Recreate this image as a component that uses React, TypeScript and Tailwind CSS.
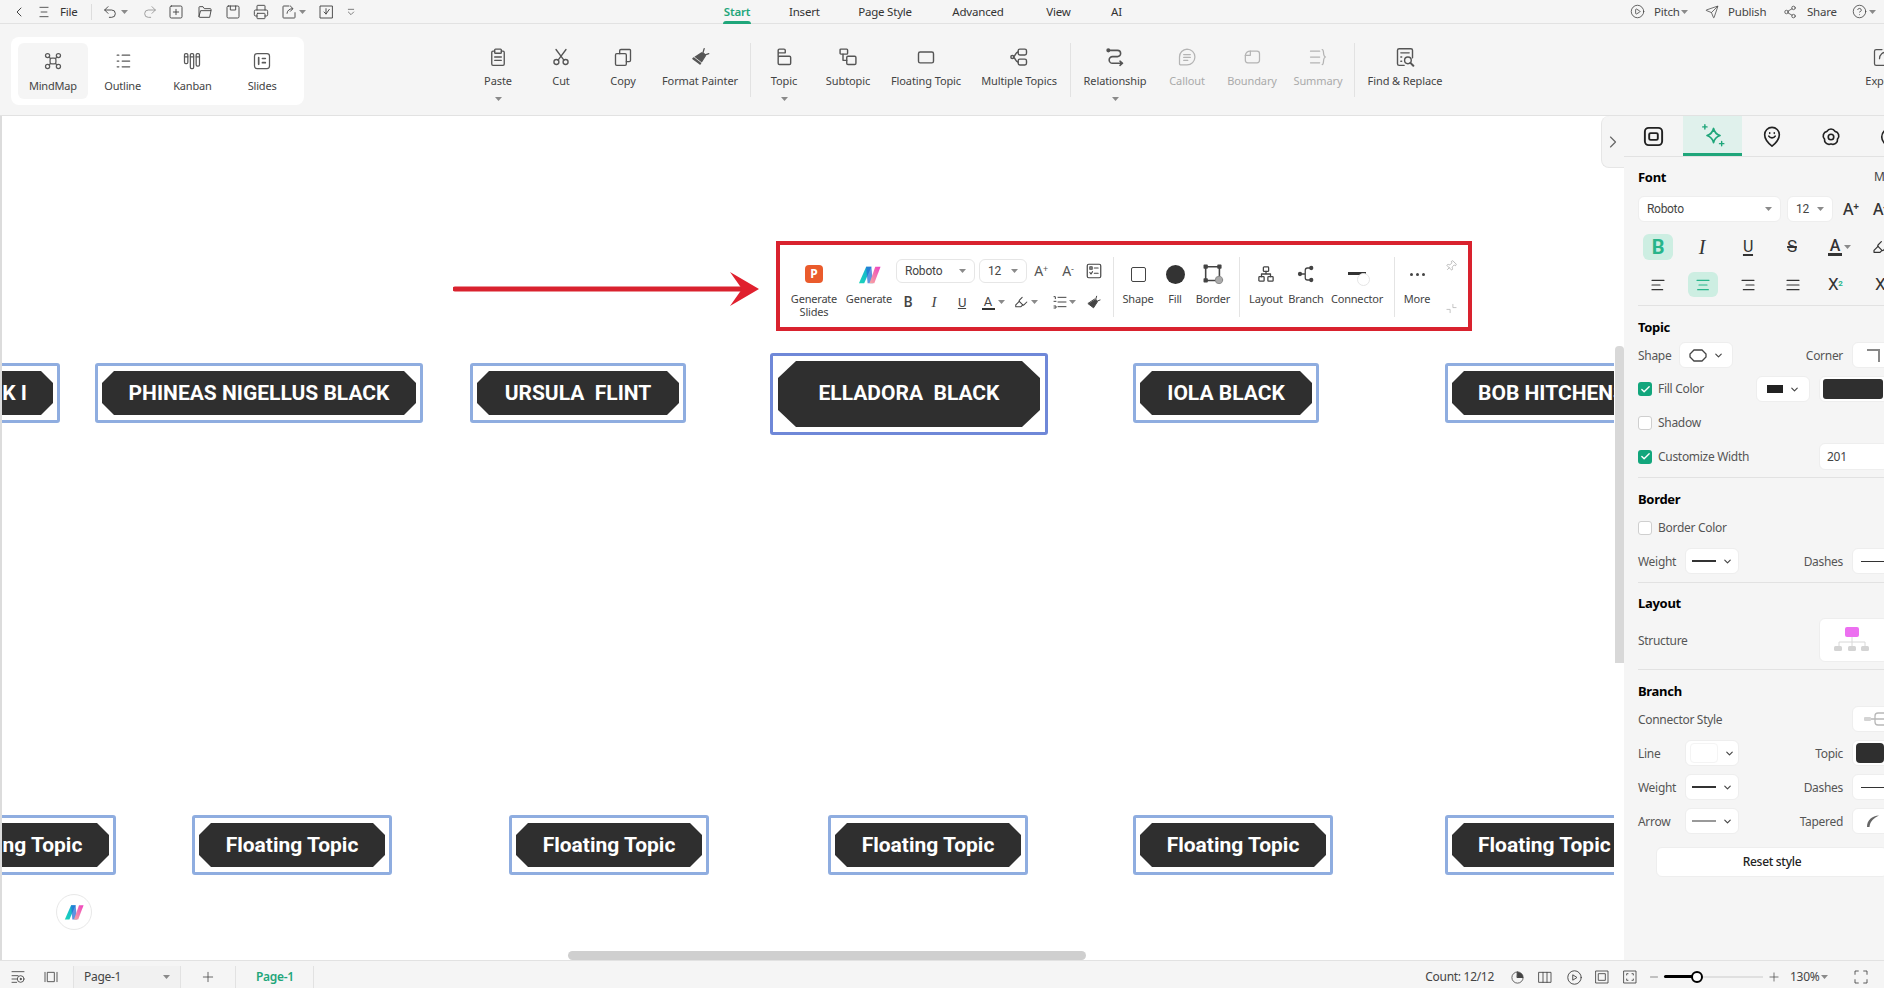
import type { ReactNode } from "react";
import {
  Check,
  ChevronDown,
  ChevronLeft,
  ChevronRight,
  CirclePlay,
  CircleHelp,
  Highlighter,
  Minus,
  Pin,
  Plus,
  Printer,
  Redo2,
  Send,
  Share2,
  Undo2,
} from "lucide-react";

function Ico({ size = 20, sw = 1.5, className = "", children }: { size?: number; sw?: number; className?: string; children: ReactNode }) {
  return (
    <svg width={size} height={size} viewBox="0 0 24 24" fill="none" stroke="currentColor" strokeWidth={sw} strokeLinecap="round" strokeLinejoin="round" className={"shrink-0 " + className}>
      {children}
    </svg>
  );
}

function Caret({ className = "" }: { className?: string }) {
  return (
    <svg width="7" height="4" viewBox="0 0 7 4" className={"shrink-0 " + className}>
      <path d="M0 0h7L3.5 4z" fill="#8a8a8a" />
    </svg>
  );
}

function AiLogo({ size = 24 }: { size?: number }) {
  return (
    <svg width={size} height={size} viewBox="0 0 24 24" className="shrink-0">
      <defs>
        <linearGradient id="aiL" x1="0" y1="1" x2="1" y2="0">
          <stop offset="0" stopColor="#19d6b8" />
          <stop offset="1" stopColor="#17a9d8" />
        </linearGradient>
        <linearGradient id="aiR" x1="0" y1="1" x2="1" y2="0">
          <stop offset="0" stopColor="#f7a9a0" />
          <stop offset="1" stopColor="#ee3fc0" />
        </linearGradient>
      </defs>
      <path d="M1 21 8.500 4H14L6.500 21z" fill="url(#aiL)" />
      <path d="M8.500 4H14l1.500 17H10z" fill="#2a6fd6" opacity=".75" />
      <path d="M12 21 18 4h5.500L17 21z" fill="url(#aiR)" />
    </svg>
  );
}

const icons = {
  mindmap: (
    <Ico size={20}>
      <circle cx="5.500" cy="5.500" r="2.500" />
      <circle cx="18.500" cy="5.500" r="2.500" />
      <circle cx="5.500" cy="18.500" r="2.500" />
      <circle cx="18.500" cy="18.500" r="2.500" />
      <rect x="8.500" y="8.500" width="7" height="7" rx="2" />
      <path d="M7.500 7.500 9 9M16.500 7.500 15 9M7.500 16.500 9 15M16.500 16.500 15 15" />
    </Ico>
  ),
  outline: (
    <Ico size={20}>
      <path d="M5 5h2M11 5h9M5 12h2M11 12h9M5 19h2M11 19h9" />
    </Ico>
  ),
  kanban: (
    <Ico size={20}>
      <rect x="3" y="3" width="4" height="12" rx="1.500" />
      <rect x="10" y="3" width="4" height="18" rx="1.500" />
      <rect x="17" y="3" width="4" height="15" rx="1.500" />
      <path d="M3 7h4M10 7h4M17 7h4" />
    </Ico>
  ),
  slides: (
    <Ico size={20}>
      <rect x="3" y="3" width="18" height="18" rx="3" />
      <path d="M8 8v8M12.500 9H16M12.500 14H16" strokeWidth="2" />
    </Ico>
  ),
  paste: (
    <Ico size={20} sw={1.6}>
      <path d="M8 5H6a1.500 1.500 0 0 0-1.500 1.500v14A1.500 1.500 0 0 0 6 22h12a1.500 1.500 0 0 0 1.500-1.500v-14A1.500 1.500 0 0 0 18 5h-2" />
      <rect x="8" y="2.500" width="8" height="5" rx="1" />
      <path d="M8 12h8M8 16h8" />
    </Ico>
  ),
  cut: (
    <Ico size={20} sw={1.6}>
      <circle cx="6.500" cy="18" r="3" />
      <circle cx="17.500" cy="18" r="3" />
      <path d="M6 3l9.500 12.800M18 3 8.500 15.800" />
    </Ico>
  ),
  copy: (
    <Ico size={20} sw={1.6}>
      <rect x="3" y="8" width="13" height="14" rx="1.500" />
      <path d="M8 8V4.500A1.500 1.500 0 0 1 9.500 3H20a1 1 0 0 1 1 1v12a1.500 1.500 0 0 1-1.500 1.500H16" />
    </Ico>
  ),
  painter: (
    <Ico size={20} sw={1.6}>
      <path d="M17 2l-1.500 5 3 2.500 4-1.500" />
      <path d="M14 7l4.500 3.500-6.500 10L3.500 14z" fill="currentColor" />
      <path d="M5 12l9 7" stroke="#f5f5f5" strokeWidth="1" />
    </Ico>
  ),
  topic: (
    <Ico size={20} sw={1.7}>
      <path d="M5 11V4a1.500 1.500 0 0 1 1.500-1.500H12A1.500 1.500 0 0 1 13.500 4v3H5" />
      <rect x="5" y="11" width="15" height="10" rx="1.500" />
    </Ico>
  ),
  subtopic: (
    <Ico size={20} sw={1.7}>
      <rect x="2.500" y="2.500" width="9" height="6" rx="1" />
      <path d="M6 8.500V16h4.500" />
      <rect x="10.500" y="11" width="11" height="10" rx="1.500" />
    </Ico>
  ),
  floating: (
    <Ico size={20} sw={1.7}>
      <rect x="3" y="6" width="18" height="13" rx="2" />
    </Ico>
  ),
  multiple: (
    <Ico size={20} sw={1.7}>
      <rect x="11" y="2.500" width="10" height="7" rx="2" />
      <rect x="11" y="14.500" width="10" height="7" rx="2" />
      <circle cx="4" cy="12" r="1.800" />
      <path d="M11 6c-3 0-3 4-5.200 5.500M11 18c-3 0-3-4-5.200-5.500" />
    </Ico>
  ),
  relation: (
    <Ico size={20} sw={1.9}>
      <circle cx="4" cy="4" r="1.500" fill="currentColor" />
      <path d="M5.500 4H15a3.500 3.500 0 0 1 0 7.500H9a4 4 0 0 0 0 8h11" />
      <path d="M18 17l3 2.500-3 2.500" fill="currentColor" />
    </Ico>
  ),
  callout: (
    <Ico size={20}>
      <path d="M12 2.500a9.500 9.500 0 0 1 0 19H4.500c-.8 0-1.500-.7-1.500-1.500v-8a9.500 9.500 0 0 1 9-9.500z" />
      <path d="M8 9h8M8 12.500h8M8 16h5" />
    </Ico>
  ),
  boundary: (
    <Ico size={20}>
      <path d="M10 5h8a3 3 0 0 1 3 3v8a3 3 0 0 1-3 3H7a3 3 0 0 1-3-3v-6h6z" />
      <path d="M4 10a6 6 0 0 1 6-5" />
    </Ico>
  ),
  summary: (
    <Ico size={20}>
      <path d="M3 5h11M3 12h11M3 19h11M17 3c3 0 0 8 4 9-4 1-1 9-4 9" />
    </Ico>
  ),
  find: (
    <Ico size={20} sw={1.7}>
      <path d="M11 22H5a2 2 0 0 1-2-2V4a2 2 0 0 1 2-2h14a2 2 0 0 1 2 2v9" />
      <path d="M7 7h10M7 12h1M7 17h1" />
      <circle cx="15.500" cy="16" r="4" />
      <path d="M18.500 19l3.500 3.500" strokeWidth="2.400" />
    </Ico>
  ),
  exportIcon: (
    <Ico size={20}>
      <path d="M12 3H5a2 2 0 0 0-2 2v15a2 2 0 0 0 2 2h15a2 2 0 0 0 2-2v-8" />
      <path d="M9 14c0-5 4-8 9-8M15 2.500 19 6l-4 3.500" />
    </Ico>
  ),
};

function ViewTab({ icon, label, active }: { icon: ReactNode; label: string; active?: boolean }) {
  return (
    <div className={"w-[70px] h-[56px] rounded-md flex flex-col items-center text-[#5a5a5a] " + (active ? "bg-[#f5f5f5]" : "")}>
      <div className="mt-[8px]">{icon}</div>
      <span className="mt-[8px] text-[11px] leading-[14px] text-[#444]">{label}</span>
    </div>
  );
}

function RibbonTool({ icon, label, w, caret, off }: { icon: ReactNode; label: string; w: string; caret?: boolean; off?: boolean }) {
  return (
    <div className={"flex flex-col items-center shrink-0 " + w + (off ? " text-[#b4b4b4]" : " text-[#555]")}>
      <div className="mt-[23px] h-[20px]">{icon}</div>
      <span className={"mt-[7px] text-[11px] leading-[14px] tracking-[-0.1px] whitespace-nowrap " + (off ? "text-[#aaa]" : "text-[#444]")}>{label}</span>
      {caret && <Caret className="mt-[9px]" />}
    </div>
  );
}

function RibbonSep() {
  return <div className="w-px h-[54px] mt-[19px] bg-[#e2e2e2] shrink-0" />;
}

function TitleBar() {
  return (
    <header className="h-[24px] shrink-0 flex items-center bg-[#f5f5f5] border-b border-[#e2e2e2] text-[11.5px] text-[#333] pl-[11px] whitespace-nowrap">
      <ChevronLeft size={16} strokeWidth={1.5} className="text-[#444] shrink-0" />
      <Ico size={14} className="ml-[10px] text-[#444]">
        <path d="M5 4h14M7 12h10M5 20h14" />
      </Ico>
      <span className="ml-[9px] w-[18px] leading-[16px]">File</span>
      <div className="ml-[13px] w-px h-[16px] bg-[#ddd]" />
      <Undo2 size={16} strokeWidth={1.4} className="ml-[10px] text-[#444] shrink-0" />
      <Caret className="ml-[3px]" />
      <Redo2 size={16} strokeWidth={1.4} className="ml-[14px] text-[#999] shrink-0" />
      <Ico size={16} sw={1.4} className="ml-[10px] text-[#444]">
        <rect x="3" y="3" width="18" height="18" rx="2" />
        <path d="M12 8v8M8 12h8" />
      </Ico>
      <Ico size={16} sw={1.4} className="ml-[13px] text-[#444]">
        <path d="M3 19V5a1 1 0 0 1 1-1h5l2 3h9a1 1 0 0 1 1 1v2M3 19a1 1 0 0 0 1 1h15l2-10H6z" />
      </Ico>
      <Ico size={16} sw={1.4} className="ml-[12px] text-[#444]">
        <rect x="3" y="3" width="18" height="18" rx="2" />
        <path d="M8 3v6h8V3" />
      </Ico>
      <Printer size={16} strokeWidth={1.4} className="ml-[12px] text-[#444] shrink-0" />
      <Ico size={16} sw={1.4} className="ml-[12px] text-[#444]">
        <path d="M12 3H4a1 1 0 0 0-1 1v16a1 1 0 0 0 1 1h16a1 1 0 0 0 1-1v-7" />
        <path d="M9 14c0-4 4-7 8-7M14 3l4 4-4 4" />
      </Ico>
      <Caret className="ml-[2px]" />
      <Ico size={16} sw={1.4} className="ml-[12px] text-[#444]">
        <path d="M21 3H3v18h18z" />
        <path d="M12 7v8M9 12l3 3 5-7" />
      </Ico>
      <Ico size={8} sw={2.500} className="ml-[13px] text-[#666]">
        <path d="M4 4h16M4 12l8 8 8-8" />
      </Ico>
      <nav className="ml-[368px] flex items-center gap-10 h-full">
        <div className="relative w-[28px] h-full flex items-center justify-center text-[#1fa67a] font-semibold">
          Start
          <div className="absolute left-0 right-0 -bottom-px h-[3px] rounded-t-sm bg-[#1fa67a]" />
        </div>
        <span className="w-[29px] -ml-[2px] text-center">Insert</span>
        <span className="w-[54px] text-center">Page Style</span>
        <span className="w-[52px] text-center">Advanced</span>
        <span className="w-[25px] ml-[2px] text-center">View</span>
        <span className="w-[10px] text-center">AI</span>
      </nav>
      <div className="ml-auto flex items-center text-[#444] pr-[8px]">
        <CirclePlay size={15} strokeWidth={1.3} />
        <span className="ml-[9px] w-[25px]">Pitch</span>
        <Caret className="ml-[2px]" />
        <Send size={14} strokeWidth={1.3} className="ml-[17px]" />
        <span className="ml-[9px] w-[37px]">Publish</span>
        <Share2 size={14} strokeWidth={1.3} className="ml-[18px]" />
        <span className="ml-[10px] w-[28px]">Share</span>
        <CircleHelp size={15} strokeWidth={1.3} className="ml-[17px]" />
        <Caret className="ml-[2px]" />
      </div>
    </header>
  );
}

function Ribbon() {
  return (
    <section className="h-[92px] shrink-0 flex items-start bg-[#f5f5f5] border-b border-[#e2e2e2] overflow-hidden">
      <div className="ml-[11px] mt-[13px] w-[293px] h-[68px] rounded-lg bg-white flex items-center px-[7px] shrink-0">
        <ViewTab icon={icons.mindmap} label="MindMap" active />
        <ViewTab icon={icons.outline} label="Outline" />
        <ViewTab icon={icons.kanban} label="Kanban" />
        <ViewTab icon={icons.slides} label="Slides" />
      </div>
      <div className="ml-[162px] flex items-start">
        <RibbonTool icon={icons.paste} label="Paste" w="w-[64px]" caret />
        <RibbonTool icon={icons.cut} label="Cut" w="w-[62px]" />
        <RibbonTool icon={icons.copy} label="Copy" w="w-[62px]" />
        <RibbonTool icon={icons.painter} label="Format Painter" w="w-[92px]" />
        <div className="ml-[4px]"><RibbonSep /></div>
        <RibbonTool icon={icons.topic} label="Topic" w="w-[66px]" caret />
        <RibbonTool icon={icons.subtopic} label="Subtopic" w="w-[62px]" />
        <RibbonTool icon={icons.floating} label="Floating Topic" w="w-[94px]" />
        <RibbonTool icon={icons.multiple} label="Multiple Topics" w="w-[92px]" />
        <div className="ml-[5px]"><RibbonSep /></div>
        <RibbonTool icon={icons.relation} label="Relationship" w="w-[88px]" caret />
        <RibbonTool icon={icons.callout} label="Callout" w="w-[56px]" off />
        <RibbonTool icon={icons.boundary} label="Boundary" w="w-[74px]" off />
        <RibbonTool icon={icons.summary} label="Summary" w="w-[58px]" off />
        <div className="ml-[7px]"><RibbonSep /></div>
        <RibbonTool icon={icons.find} label="Find & Replace" w="w-[100px]" />
        <div className="ml-[399px]">
          <RibbonTool icon={icons.exportIcon} label="Export" w="w-[56px]" />
        </div>
      </div>
    </section>
  );
}

function Tb({ icon, label, w, className = "" }: { icon: ReactNode; label: ReactNode; w: string; className?: string }) {
  return (
    <div className={"flex flex-col items-center shrink-0 text-[#444] " + w + " " + className}>
      <div className="mt-[19px] h-[20px] flex items-center justify-center">{icon}</div>
      <span className="mt-[8px] text-[11px] leading-[13px] text-center text-[#444] whitespace-nowrap">{label}</span>
    </div>
  );
}

function TbSep({ className = "" }: { className?: string }) {
  return <div className={"w-px h-[60px] mt-[12px] bg-[#e4e4e4] shrink-0 " + className} />;
}

function FloatBar() {
  return (
    <div className="absolute left-[774px] top-[125px] w-[696px] h-[90px] border-[4px] border-[#d9222e] bg-white flex items-start pl-[6px]">
      <Tb
        w="w-[56px]"
        icon={
          <div className="w-[18px] h-[18px] rounded-[4px] bg-[#ea5b2c] flex items-center justify-center text-white text-[12px] font-bold leading-none">P</div>
        }
        label={<>Generate<br />Slides</>}
      />
      <Tb w="w-[50px]" className="ml-[2px]" icon={<AiLogo size={23} />} label="Generate" />
      <div className="ml-[2px] w-[210px] shrink-0 flex flex-col">
        <div className="mt-[14px] h-[24px] flex items-center text-[#444]">
          <div className="w-[79px] h-[24px] shrink-0 rounded-md border border-[#e6e6e6] flex items-center justify-between px-[8px] text-[12px] [font-family:Roboto,sans-serif]">
            Roboto
            <Caret />
          </div>
          <div className="ml-[4px] w-[48px] h-[24px] shrink-0 rounded-md border border-[#e6e6e6] flex items-center justify-between px-[8px] text-[12px] [font-family:Roboto,sans-serif]">
            12
            <Caret />
          </div>
          <span className="ml-[5px] w-[18px] shrink-0 text-center text-[14px] leading-none text-[#555]">A<sup className="text-[9px]">+</sup></span>
          <span className="ml-[9px] w-[18px] shrink-0 text-center text-[14px] leading-none text-[#555]">A<sup className="text-[9px]">-</sup></span>
          <Ico size={18} sw={1.6} className="ml-[8px]">
            <rect x="3" y="3" width="18" height="18" rx="2" />
            <rect x="6.500" y="6.500" width="3" height="3" />
            <path d="M12.500 8h5M6.500 14l1.500 2 2-3M12.500 15h5" />
          </Ico>
        </div>
        <div className="mt-[9px] h-[20px] flex items-center text-[#444] [font-family:Roboto,sans-serif]">
          <span className="ml-[4px] w-[16px] shrink-0 text-center text-[14px] font-medium leading-none">B</span>
          <span className="ml-[10px] w-[16px] shrink-0 text-center text-[15px] italic [font-family:'Liberation_Serif',serif] leading-none">I</span>
          <span className="ml-[12px] w-[16px] shrink-0 text-center text-[13px] underline leading-none">U</span>
          <span className="ml-[10px] w-[16px] shrink-0 flex flex-col items-center text-[13px] leading-[13px]">
            A
            <span className="w-[13px] h-[2px] bg-[#333]" />
          </span>
          <Caret className="ml-[2px]" />
          <Highlighter size={14} strokeWidth={1.8} className="ml-[8px] w-[16px] shrink-0" />
          <Caret className="ml-[2px]" />
          <Ico size={16} sw={1.5} className="ml-[14px]">
            <path d="M9 5h12M9 12h12M9 19h12M3 4h2v3M3 11h3M3 18h3v3H3" />
          </Ico>
          <Caret className="ml-[1px]" />
          <div className="ml-[10px] w-[16px] text-[#444] shrink-0">
            <Ico size={15} sw={1.6}>
              <path d="M17 2l-1.500 5 3 2.500 4-1.500" />
              <path d="M14 7l4.500 3.500-6.500 10L3.500 14z" fill="currentColor" />
            </Ico>
          </div>
        </div>
      </div>
      <TbSep className="ml-[7px]" />
      <Tb w="w-[36px]" className="ml-[6px]" label="Shape" icon={<div className="w-[15px] h-[15px] rounded-[2px] border-[1.5px] border-[#444]" />} />
      <Tb w="w-[36px]" className="ml-px" label="Fill" icon={<div className="w-[19px] h-[19px] rounded-full bg-[#333]" />} />
      <Tb
        w="w-[40px]"
        label="Border"
        icon={
          <Ico size={22} sw={1.700}>
            <rect x="4" y="4" width="15" height="15" rx="1" />
            <rect x="2.500" y="2.500" width="3" height="3" fill="#444" />
            <rect x="17.500" y="2.500" width="3" height="3" fill="#444" />
            <rect x="2.500" y="17.500" width="3" height="3" fill="#444" />
            <circle cx="18.500" cy="18.500" r="4" fill="#aaa" stroke="#888" strokeWidth="1" />
          </Ico>
        }
      />
      <TbSep className="ml-[6px]" />
      <Tb
        w="w-[38px]"
        className="ml-[7px]"
        label="Layout"
        icon={
          <Ico size={18} sw={1.700}>
            <rect x="8.500" y="2.500" width="7" height="6" rx="1" />
            <rect x="2.500" y="15.500" width="7" height="6" rx="1" />
            <rect x="14.500" y="15.500" width="7" height="6" rx="1" />
            <path d="M12 8.500V12M6 15.500V12h12v3.500" />
          </Ico>
        }
      />
      <Tb
        w="w-[40px]"
        className="ml-px"
        label="Branch"
        icon={
          <Ico size={18} sw={1.700}>
            <circle cx="4" cy="12" r="2" fill="currentColor" />
            <circle cx="19" cy="4" r="2" fill="currentColor" />
            <circle cx="19" cy="20" r="2" fill="currentColor" />
            <path d="M6 12h5M17 4h-3a3 3 0 0 0-3 3v10a3 3 0 0 0 3 3h3" />
          </Ico>
        }
      />
      <Tb
        w="w-[62px]"
        label="Connector"
        icon={
          <div className="relative w-[18px] h-[18px]">
            <div className="absolute left-0 right-0 top-[7px] h-[3px] bg-[#333]" />
            <div className="absolute right-[-4px] top-[8px] w-[13px] h-[13px] rounded-full border border-[#e6e6e6] bg-white" />
          </div>
        }
      />
      <TbSep className="ml-[6px]" />
      <Tb
        w="w-[36px]"
        className="ml-[4px]"
        label="More"
        icon={
          <div className="flex gap-[3px]">
            <span className="w-[3px] h-[3px] rounded-full bg-[#444]" />
            <span className="w-[3px] h-[3px] rounded-full bg-[#444]" />
            <span className="w-[3px] h-[3px] rounded-full bg-[#444]" />
          </div>
        }
      />
      <div className="ml-[8px] w-[16px] flex flex-col items-center text-[#aaa]">
        <Pin size={12} strokeWidth={1.5} className="mt-[15px] rotate-45" />
        <Ico size={11} sw={1.5} className="mt-[31px]">
          <path d="M2 14h7v7M22 10h-7V3" />
        </Ico>
      </div>
    </div>
  );
}

const octagon = "[clip-path:polygon(12px_0,calc(100%_-_12px)_0,100%_12px,100%_calc(100%_-_12px),calc(100%_-_12px)_100%,12px_100%,0_calc(100%_-_12px),0_12px)]";
const bigOctagon = "[clip-path:polygon(18px_0,calc(100%_-_18px)_0,100%_17px,100%_calc(100%_-_17px),calc(100%_-_18px)_100%,18px_100%,0_calc(100%_-_17px),0_17px)]";

function Node({ pos, text, big, align = "justify-center" }: { pos: string; text: string; big?: boolean; align?: string }) {
  return (
    <div className={"absolute rounded-[3px] border-[3px] " + pos + (big ? " border-[#6f88d8] p-[5px]" : " border-[#8fade0] px-[4px] py-[5px]")}>
      <div className={"w-full h-full bg-[#2f2f2f] flex items-center px-[26px] text-white font-bold whitespace-pre text-[21px] tracking-normal [font-family:Roboto,sans-serif] " + (big ? bigOctagon : "pt-[2px] " + octagon) + " " + align}>
        {text}
      </div>
    </div>
  );
}

function Canvas() {
  return (
    <main className="relative flex-1 bg-white">
      <div className="absolute inset-y-0 left-0 w-[1612px] overflow-hidden">
        <svg width="308" height="34" viewBox="0 0 308 34" className="absolute left-[451px] top-[156px]">
          <path d="M2 17h288" stroke="#d9222e" strokeWidth="5" strokeLinecap="round" />
          <path d="M277 0l29 17-29 17 12-17z" fill="#e0202e" />
        </svg>

        <Node pos="left-[-180px] top-[247px] w-[238px] h-[60px]" text="BLACK I" align="justify-end" />
        <Node pos="left-[93px] top-[247px] w-[328px] h-[60px]" text="PHINEAS NIGELLUS BLACK" />
        <Node pos="left-[468px] top-[247px] w-[216px] h-[60px]" text="URSULA  FLINT" />
        <Node pos="left-[768px] top-[237px] w-[278px] h-[82px]" text="ELLADORA  BLACK" big />
        <Node pos="left-[1131px] top-[247px] w-[186px] h-[60px]" text="IOLA BLACK" />
        <Node pos="left-[1443px] top-[247px] w-[260px] h-[60px]" text="BOB HITCHENS" align="justify-start" />

        <Node pos="left-[-86px] top-[699px] w-[200px] h-[60px]" text="Floating Topic" />
        <Node pos="left-[190px] top-[699px] w-[200px] h-[60px]" text="Floating Topic" />
        <Node pos="left-[507px] top-[699px] w-[200px] h-[60px]" text="Floating Topic" />
        <Node pos="left-[826px] top-[699px] w-[200px] h-[60px]" text="Floating Topic" />
        <Node pos="left-[1131px] top-[699px] w-[200px] h-[60px]" text="Floating Topic" />
        <Node pos="left-[1443px] top-[699px] w-[200px] h-[60px]" text="Floating Topic" align="justify-start" />

        <FloatBar />

        <div className="absolute left-[54px] top-[778px] w-[36px] h-[36px] rounded-full border border-[#e8e8e8] bg-white flex items-center justify-center">
          <AiLogo size={20} />
        </div>
        <div className="absolute left-[566px] bottom-0 w-[518px] h-[9px] rounded-full bg-[#cfcfcf]" />
      </div>
      <div className="absolute right-0 top-[230px] w-[9px] h-[317px] bg-[#d8d8d8] rounded-t-sm" />
      <div className="absolute right-0 top-0 w-[23px] h-[52px] bg-[#f5f5f5] border-l border-b border-[#e6e6e6] rounded-l-lg flex items-center justify-center text-[#666]">
        <ChevronRight size={20} strokeWidth={1.4} />
      </div>
    </main>
  );
}

function Drop({ children, w = "w-[54px]", h = "h-[26px]" }: { children?: ReactNode; w?: string; h?: string }) {
  return (
    <div className={"bg-white rounded-md border border-[#eeeeee] flex items-center justify-center gap-[6px] shrink-0 " + w + " " + h}>
      {children}
      <ChevronDown size={11} strokeWidth={2.500} className="text-[#444]" />
    </div>
  );
}

function Box({ children, className = "" }: { children?: ReactNode; className?: string }) {
  return <div className={"bg-white rounded-md border border-[#eeeeee] shrink-0 flex items-center " + className}>{children}</div>;
}

function CheckRow({ on, label, className = "" }: { on?: boolean; label: string; className?: string }) {
  return (
    <div className={"flex items-center gap-[6px] shrink-0 text-[12px] text-[#555] " + className}>
      {on ? (
        <span className="w-[14px] h-[14px] rounded-[3px] bg-[#12a67c] flex items-center justify-center text-white">
          <Check size={11} strokeWidth={3} />
        </span>
      ) : (
        <span className="w-[14px] h-[14px] rounded-[3px] bg-white border border-[#cfcfcf]" />
      )}
      {label}
    </div>
  );
}

function Heading({ children, className = "" }: { children: ReactNode; className?: string }) {
  return <h3 className={"text-[13px] leading-[18px] font-bold text-black " + className}>{children}</h3>;
}

function Divider({ className = "" }: { className?: string }) {
  return <div className={"h-px bg-[#e2e2e2] shrink-0 " + className} />;
}

function Label({ w, right, children }: { w: string; right?: boolean; children: ReactNode }) {
  return <span className={"shrink-0 whitespace-nowrap pt-px " + w + (right ? " text-right" : "")}>{children}</span>;
}

const line = (h: string, c = "bg-[#333]") => <span className={"w-[24px] " + h + " " + c} />;

function Panel() {
  return (
    <aside className="w-[260px] shrink-0 bg-[#f5f5f5] overflow-hidden flex flex-col text-[12px] text-[#555] tracking-[-0.3px]">
      <div className="h-[41px] shrink-0 flex border-b border-[#e2e2e2] text-[#222]">
        <div className="w-[59px] shrink-0 flex items-center justify-center pt-px">
          <Ico size={23} sw={2}>
            <rect x="3" y="3" width="18" height="18" rx="4" />
            <rect x="7.500" y="8.500" width="9" height="7" rx="1.500" />
          </Ico>
        </div>
        <div className="w-[59px] shrink-0 flex items-center justify-center bg-[#e0f1ec] border-b-[3px] border-[#1fa67a] text-[#1fa67a]">
          <Ico size={26} sw={1.6}>
            <path d="M12.500 6c.8 3.500 2.500 5.300 6 6.500-3.500 1.200-5.200 3-6 6.500-.8-3.500-2.500-5.300-6-6.500 3.500-1.200 5.200-3 6-6.500z" />
            <path d="M4.500 2.500v4M2.500 4.500h4M20 18v4M18 20h4" strokeWidth="1.300" />
          </Ico>
        </div>
        <div className="w-[59px] shrink-0 flex items-center justify-center pt-px">
          <Ico size={22} sw={1.800}>
            <path d="M12 22s-8-6.500-8-12.500a8 8 0 0 1 16 0C20 15.500 12 22 12 22z" />
            <path d="M8.500 11c1.500 2.500 5.500 2.500 7 0M9.500 7.500v.5M14.500 7.500v.5" />
          </Ico>
        </div>
        <div className="w-[59px] shrink-0 flex items-center justify-center pt-px">
          <Ico size={22} sw={1.800}>
            <path d="M7.600 5.900A5 5 0 0 1 16.400 5.900 5 5 0 0 1 19.100 14.300 5 5 0 0 1 12 19.500 5 5 0 0 1 4.900 14.300 5 5 0 0 1 7.600 5.900z" />
            <circle cx="12" cy="12" r="3" />
          </Ico>
        </div>
        <div className="w-[59px] shrink-0 flex items-center justify-center pt-px">
          <Ico size={22} sw={1.800}>
            <circle cx="12" cy="12" r="9" />
          </Ico>
        </div>
      </div>

      <div className="pl-[14px] flex flex-col">
        <div className="mt-[11px] flex items-center justify-between h-[18px]">
          <Heading>Font</Heading>
          <span className="text-[#444] w-[10px] overflow-hidden">More</span>
        </div>

        <div className="mt-[10px] flex items-center h-[26px] text-[#444]">
          <Box className="w-[143px] h-[26px] justify-between px-[8px] text-[12px] [font-family:Roboto,sans-serif]">
            Roboto
            <Caret />
          </Box>
          <Box className="ml-[6px] w-[46px] h-[26px] justify-between px-[8px] text-[12px] [font-family:Roboto,sans-serif]">
            12
            <Caret />
          </Box>
          <span className="ml-[10px] w-[18px] shrink-0 text-[16px] font-medium leading-none text-[#333]">A<sup className="text-[10px] font-bold">+</sup></span>
          <span className="ml-[12px] w-[18px] shrink-0 text-[16px] font-medium leading-none text-[#333]">A<sup className="text-[10px] font-bold">-</sup></span>
        </div>

        <div className="mt-[12px] h-[26px] flex items-center text-[#333] [font-family:Roboto,sans-serif]">
          <span className="ml-[5px] w-[30px] h-[26px] shrink-0 rounded-md bg-[#cdeee2] text-[#27b58a] text-[20px] font-bold flex items-center justify-center">B</span>
          <span className="ml-[14px] w-[30px] shrink-0 text-center text-[20px] italic [font-family:'Liberation_Serif',serif]">I</span>
          <span className="ml-[16px] w-[30px] shrink-0 text-center text-[16px] underline decoration-[1.5px] underline-offset-2">U</span>
          <span className="ml-[14px] w-[30px] shrink-0 text-center text-[17px] line-through decoration-2">S</span>
          <span className="ml-[20px] w-[16px] shrink-0 flex flex-col items-center text-[16px] leading-[15px] font-medium">
            A
            <span className="w-[14px] h-[2.500px] bg-[#333]" />
          </span>
          <Caret className="ml-px" />
          <Highlighter size={16} strokeWidth={1.800} className="ml-[21px] shrink-0" />
        </div>

        <div className="mt-[12px] h-[25px] flex items-center text-[#333]">
          <Ico size={16} sw={1.800} className="ml-[12px]">
            <path d="M3 5h18M3 12h12M3 19h16" />
          </Ico>
          <span className="ml-[22px] w-[30px] h-[25px] shrink-0 rounded-md bg-[#cdeee2] text-[#27b58a] flex items-center justify-center">
            <Ico size={16} sw={1.800}>
              <path d="M3 5h18M6 12h12M4 19h16" />
            </Ico>
          </span>
          <Ico size={16} sw={1.800} className="ml-[22px]">
            <path d="M3 5h18M9 12h12M5 19h16" />
          </Ico>
          <Ico size={16} sw={1.800} className="ml-[29px]">
            <path d="M3 5h18M3 12h18M3 19h18" />
          </Ico>
          <span className="ml-[27px] w-[16px] shrink-0 text-[17px] leading-none [font-family:Roboto,sans-serif]">X<sup className="text-[8px] text-[#27b58a] font-bold">2</sup></span>
          <span className="ml-[31px] shrink-0 text-[17px] leading-none [font-family:Roboto,sans-serif]">X</span>
        </div>
      </div>

      <Divider className="mt-[8px] ml-[14px]" />

      <div className="pl-[14px] flex flex-col">
        <Heading className="mt-[12px]">Topic</Heading>
        <div className="mt-[6px] h-[26px] flex items-center">
          <Label w="w-[41px]">Shape</Label>
          <Drop>
            <svg width="18" height="13" viewBox="0 0 18 13" fill="none" stroke="#444" strokeWidth="1.300">
              <path d="M5 1h8l4 4v3l-4 4H5L1 8V5z" />
            </svg>
          </Drop>
          <Label w="w-[110px]" right>Corner</Label>
          <Box className="ml-[9px] w-[60px] h-[26px] pl-[14px]">
            <div className="w-[13px] h-[13px] border-t-2 border-r-2 border-[#888]" />
          </Box>
        </div>
        <div className="mt-[8px] h-[26px] flex items-center">
          <CheckRow on label="Fill Color" className="w-[118px]" />
          <Drop>
            <span className="w-[16px] h-[8px] bg-[#222]" />
          </Drop>
          <Box className="ml-[9px] w-[70px] h-[26px] pl-[3px]">
            <div className="w-[60px] h-[20px] rounded-[3px] bg-[#2f2f2f]" />
          </Box>
        </div>
        <CheckRow label="Shadow" className="mt-[11px] h-[20px]" />
        <div className="mt-[10px] h-[27px] flex items-center">
          <CheckRow on label="Customize Width" className="w-[181px]" />
          <Box className="w-[70px] h-[27px] pl-[7px] text-[12px] text-[#444]">201</Box>
        </div>
      </div>

      <Divider className="mt-[7px] ml-[14px]" />

      <div className="pl-[14px] flex flex-col">
        <Heading className="mt-[12px]">Border</Heading>
        <CheckRow label="Border Color" className="mt-[10px] h-[20px]" />
        <div className="mt-[10px] h-[26px] flex items-center">
          <Label w="w-[47px]">Weight</Label>
          <Drop>{line("h-[2.500px]")}</Drop>
          <Label w="w-[104px]" right>Dashes</Label>
          <Box className="ml-[9px] w-[60px] h-[26px] pl-[8px]">{line("h-px")}</Box>
        </div>
      </div>

      <Divider className="mt-[8px] ml-[14px]" />

      <div className="pl-[14px] flex flex-col">
        <Heading className="mt-[11px]">Layout</Heading>
        <div className="mt-[6px] h-[44px] flex items-center">
          <Label w="w-[181px]">Structure</Label>
          <Box className="w-[70px] h-[44px] pl-[14px]">
            <svg width="36" height="26" viewBox="0 0 36 26" fill="none">
              <rect x="11" y="0" width="14" height="10" rx="2" fill="#ec6ff0" />
              <path d="M18 10v5M5 20v-5h26v5M18 15v5" stroke="#d8d8d8" />
              <rect x="0" y="19" width="8" height="5" rx="1.500" fill="#d4d4d4" />
              <rect x="14" y="19" width="8" height="5" rx="1.500" fill="#d4d4d4" />
              <rect x="27" y="19" width="8" height="5" rx="1.500" fill="#d4d4d4" />
            </svg>
          </Box>
        </div>
      </div>

      <Divider className="mt-[7px] ml-[14px]" />

      <div className="pl-[14px] flex flex-col">
        <Heading className="mt-[12px]">Branch</Heading>
        <div className="mt-[6px] h-[26px] flex items-center">
          <Label w="w-[214px]">Connector Style</Label>
          <Box className="w-[60px] h-[26px] pl-[11px]">
            <svg width="24" height="16" viewBox="0 0 24 16" fill="none">
              <rect x="0" y="6" width="7" height="4" rx="1" fill="#d4d4d4" />
              <path d="M7 8h4M22 2h-8a3 3 0 0 0-3 3v6a3 3 0 0 0 3 3h8M11 8h11" stroke="#b8b8b8" strokeWidth="1.300" />
            </svg>
          </Box>
        </div>
        <div className="mt-[8px] h-[26px] flex items-center">
          <Label w="w-[47px]">Line</Label>
          <Drop>
            <span className="w-[28px] h-[20px] rounded-[4px] bg-white border border-[#f4f4f4]" />
          </Drop>
          <Label w="w-[104px]" right>Topic</Label>
          <Box className="ml-[9px] w-[60px] h-[26px] pl-[3px]">
            <div className="w-[28px] h-[20px] rounded-[4px] bg-[#2f2f2f]" />
          </Box>
        </div>
        <div className="mt-[8px] h-[26px] flex items-center">
          <Label w="w-[47px]">Weight</Label>
          <Drop>{line("h-[2.500px]")}</Drop>
          <Label w="w-[104px]" right>Dashes</Label>
          <Box className="ml-[9px] w-[60px] h-[26px] pl-[8px]">{line("h-px")}</Box>
        </div>
        <div className="mt-[8px] h-[26px] flex items-center">
          <Label w="w-[47px]">Arrow</Label>
          <Drop>{line("h-[2px]", "bg-[#999]")}</Drop>
          <Label w="w-[104px]" right>Tapered</Label>
          <Box className="ml-[9px] w-[60px] h-[26px] pl-[13px]">
            <svg width="14" height="14" viewBox="0 0 14 14" fill="none">
              <path d="M1 13C1 6 6 2 13 1.500 8 4 4 7 3.500 13z" fill="#666" />
            </svg>
          </Box>
        </div>
        <button className="mt-[13px] ml-[18px] w-[232px] h-[30px] shrink-0 bg-white rounded-md border border-[#eeeeee] text-[12px] font-medium text-[#222]">Reset style</button>
      </div>
    </aside>
  );
}

function StatusBar() {
  return (
    <footer className="h-[28px] shrink-0 flex items-center pt-[5px] bg-[#f5f5f5] border-t border-[#e2e2e2] text-[12px] text-[#444] tracking-[-0.3px] whitespace-nowrap">
      <Ico size={16} sw={1.300} className="ml-[10px]">
        <path d="M3 4h18M3 10h9M3 15h7M3 20h7" />
        <circle cx="16" cy="15" r="5" />
        <circle cx="16" cy="15" r="1" fill="currentColor" />
      </Ico>
      <Ico size={16} sw={1.300} className="ml-[17px]">
        <rect x="7" y="5" width="10" height="14" />
        <path d="M3 5v14M21 5v14" />
      </Ico>
      <div className="ml-[14px] w-px h-full bg-[#e2e2e2]" />
      <div className="w-[106px] h-full bg-[#f1f1f1] flex items-center justify-between pl-[10px] pr-[10px]">
        Page-1
        <Caret />
      </div>
      <div className="w-px h-full bg-[#e2e2e2]" />
      <Plus size={16} strokeWidth={1.200} className="ml-[19px] shrink-0" />
      <div className="ml-[19px] w-px h-full bg-[#e2e2e2]" />
      <span className="ml-[20px] w-[38px] font-semibold text-[#1fa67a]">Page-1</span>
      <div className="ml-[19px] w-px h-full bg-[#e2e2e2]" />
      <div className="ml-auto flex items-center pr-[15px]">
        <span>Count: 12/12</span>
        <Ico size={15} sw={1.300} className="ml-[16px]">
          <path d="M12 3a9 9 0 1 0 9 9H12z" />
          <path d="M12 3a9 9 0 0 1 9 9h-9z" fill="currentColor" />
        </Ico>
        <Ico size={16} sw={1.300} className="ml-[12px]">
          <path d="M3 5h18v15H3zM9 5v15M15 5v15" />
        </Ico>
        <Ico size={17} sw={1.300} className="ml-[13px]">
          <circle cx="12" cy="12" r="9.500" />
          <path d="M10 8.500l5.500 3.500-5.500 3.500z" />
        </Ico>
        <Ico size={16} sw={1.300} className="ml-[11px]">
          <rect x="3" y="3" width="18" height="18" />
          <rect x="7" y="7" width="10" height="10" />
        </Ico>
        <Ico size={16} sw={1.300} className="ml-[12px]">
          <rect x="3" y="3" width="18" height="18" />
          <path d="M7 9V7h2M15 7h2v2M17 15v2h-2M9 17H7v-2" />
        </Ico>
        <Minus size={12} strokeWidth={1.200} className="ml-[10px]" />
        <div className="relative ml-[4px] w-[99px] h-[2px] bg-[#e0e0e0]">
          <div className="absolute left-0 top-[-1px] w-[33px] h-[3px] bg-black rounded-full" />
          <div className="absolute left-[27px] top-[-5px] w-[12px] h-[12px] rounded-full bg-white border-[2.500px] border-black" />
        </div>
        <Plus size={14} strokeWidth={1.200} className="ml-[4px]" />
        <span className="ml-[9px] w-[27px]">130%</span>
        <Caret className="ml-[4px]" />
        <Ico size={16} sw={1.300} className="ml-[25px]">
          <path d="M3 8V3h5M16 3h5v5M21 16v5h-5M8 21H3v-5" />
        </Ico>
      </div>
    </footer>
  );
}

export default function App() {
  return (
    <div className="w-[1884px] h-[988px] overflow-hidden flex flex-col bg-white tracking-[-0.2px] [font-family:'Noto_Sans',sans-serif]">
      <TitleBar />
      <Ribbon />
      <div className="flex-1 min-h-0 flex">
        <div className="w-[2px] shrink-0 bg-[#dcdcdc]" />
        <Canvas />
        <Panel />
      </div>
      <StatusBar />
    </div>
  );
}
